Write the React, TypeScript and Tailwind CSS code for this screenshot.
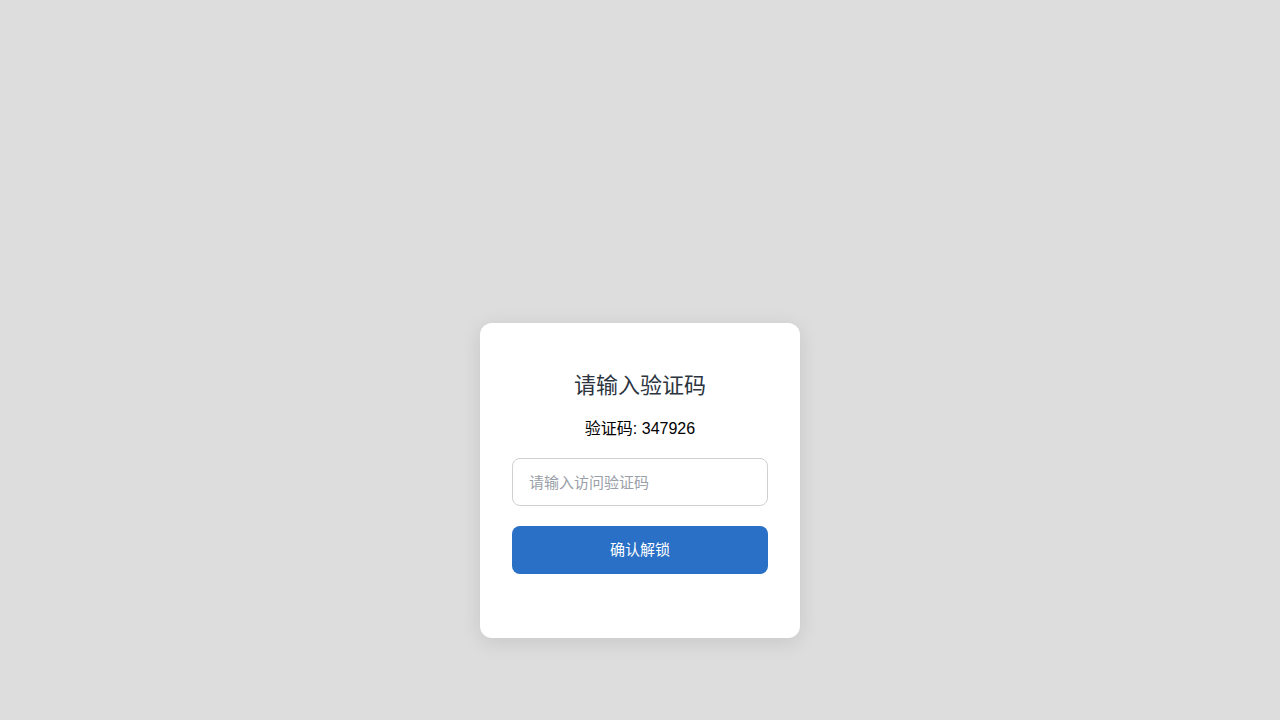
import React, { useState } from 'react';

export default function App() {
  const [code, setCode] = useState('');

  return (
    <div
      className="min-h-screen w-full bg-[#dddddd] flex justify-center pt-[323px]"
      style={{ fontFamily: '"Liberation Sans", "Noto Sans CJK SC", sans-serif' }}
    >
      <div className="w-[320px] h-[315px] bg-white rounded-xl shadow-[0_4px_20px_rgba(0,0,0,0.1)] px-8 pt-[49px] pb-[64px] flex flex-col">
        <h2 className="text-[22px] leading-[28px] text-[#2c3440] text-center">请输入验证码</h2>
        <p className="mt-[17px] text-base leading-6 text-black text-center">验证码: 347926</p>
        <input
          value={code}
          onChange={(e) => setCode(e.target.value)}
          placeholder="请输入访问验证码"
          className="mt-[17px] h-12 w-full rounded-lg border border-[#d0d0d0] px-4 text-[15px] text-[#333] placeholder:text-[#9aa0a8] outline-none"
        />
        <button
          type="button"
          className="mt-5 h-12 w-full rounded-lg bg-[#2970c6] text-[15px] text-white"
        >
          确认解锁
        </button>
      </div>
    </div>
  );
}
